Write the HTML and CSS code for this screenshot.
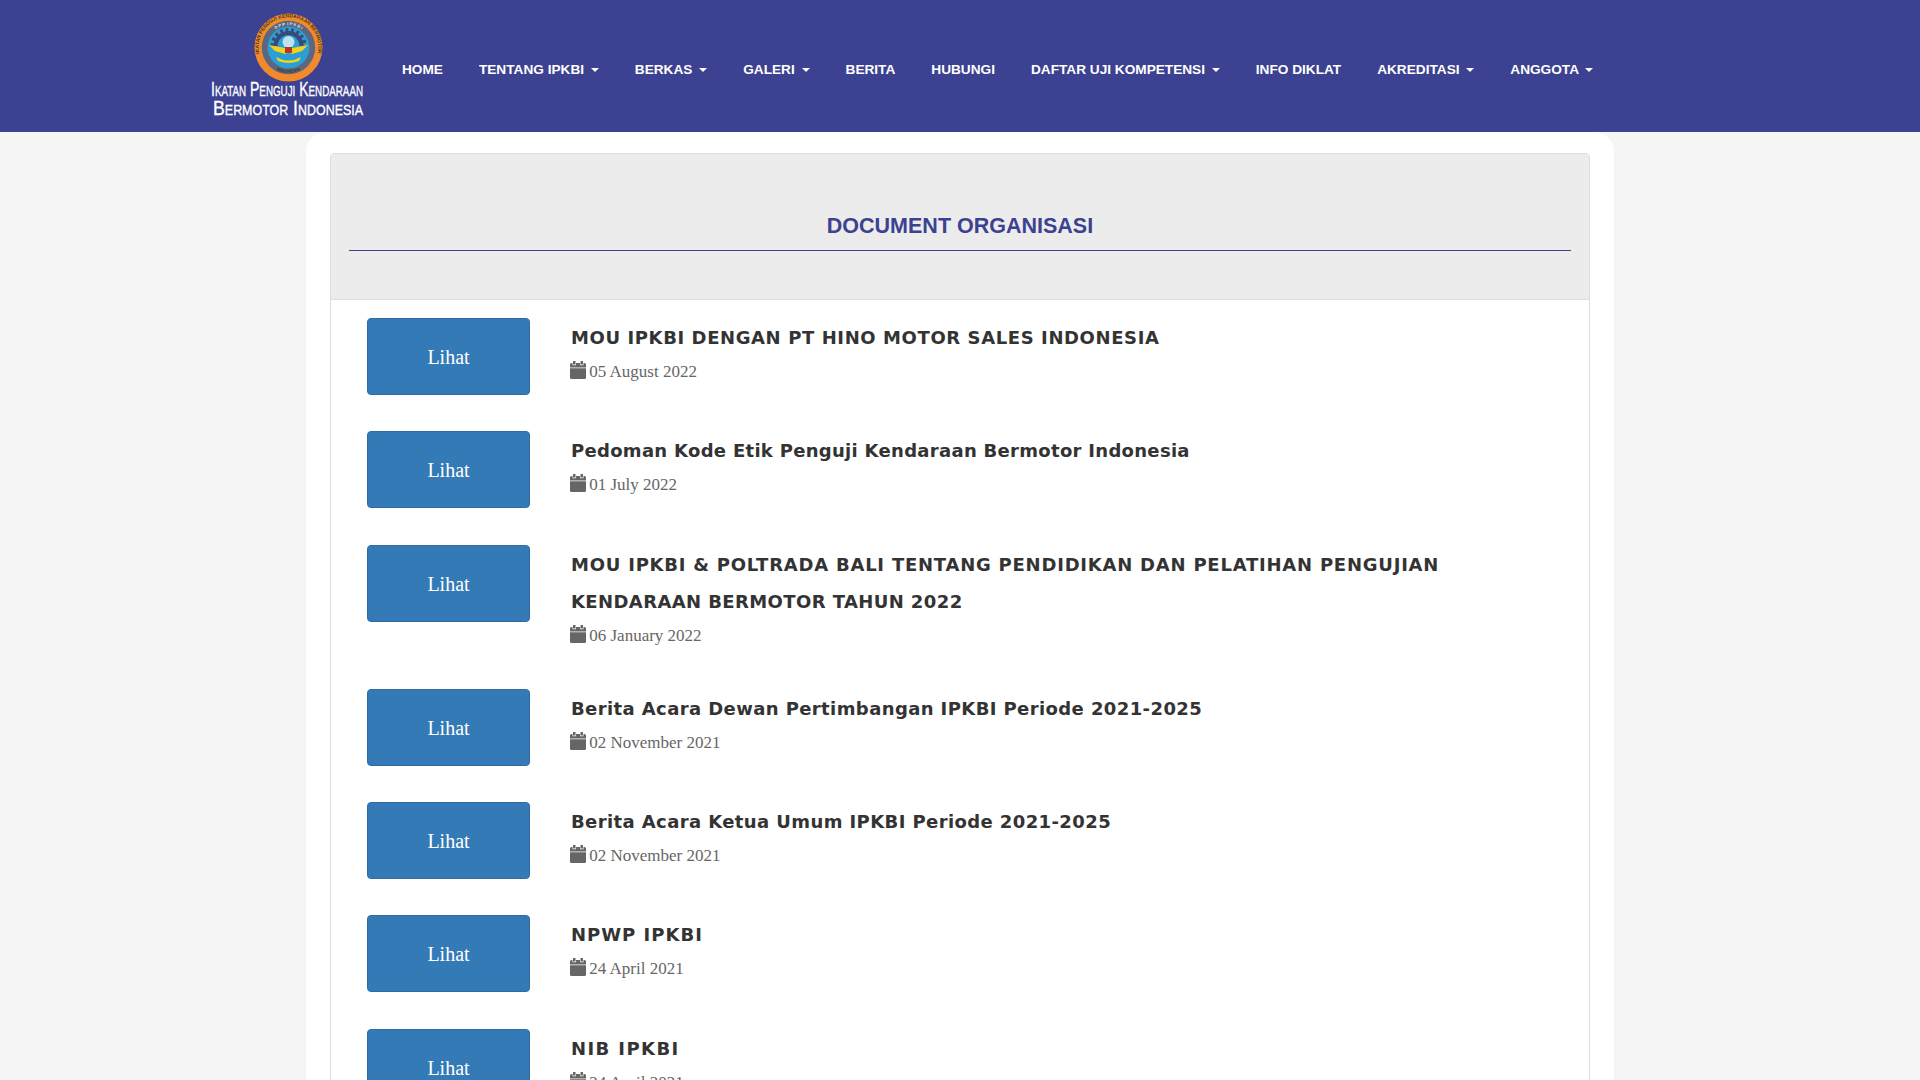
FILE: index.html
```html
<!DOCTYPE html>
<html lang="en">
<head>
    <meta charset="UTF-8">
    <meta name="viewport" content="width=device-width, initial-scale=1.0">
    <title>Document Organisasi</title>
    <link rel="stylesheet" href="styles.css">
</head>
<body>
    <svg class="icon-defs" width="0" height="0">
        <symbol id="cal" viewBox="0 0 16 18">
            <path d="M3 0h2.500v3.500h-2.500zM10.500 0h2.500v3.500h-2.500z"/>
            <path d="M1.500 2h1v2.200h3.500v-2.200h4v2.200h3.500v-2.200h1a1.500 1.500 0 0 1 1.500 1.500v3h-16v-3a1.500 1.500 0 0 1 1.500-1.500z"/>
            <path d="M0 7.300h16v9.200a1.500 1.500 0 0 1-1.500 1.500h-13a1.500 1.500 0 0 1-1.500-1.500z"/>
        </symbol>
    </svg>

    <header class="topbar">
        <a class="brand" href="#">
            <svg class="logo" width="160" height="120" viewBox="0 0 160 120">
                <defs>
                    <path id="ringTop" d="M57 65.500a29.800 29.800 0 1 1 47 0"/>
                    <path id="ringMid" d="M60 38.500a22.400 22.400 0 0 1 41 0"/>
                    <path id="ringBottom" d="M59 62a26.800 26.800 0 0 0 43 0"/>
                </defs>
                <circle cx="80.500" cy="47.500" r="34" fill="#f08a2c"/>
                <circle cx="80.500" cy="47.500" r="26.700" fill="#59677f"/>
                <circle cx="80.500" cy="47.500" r="21" fill="#2a9ed6"/>
                <path d="M66 46a14.500 14.500 0 0 1 29 0" fill="none" stroke="#3a4a78" stroke-width="7" stroke-dasharray="2.500 2.500"/>
                <path d="M67.500 46a13 13 0 0 1 26 0" fill="none" stroke="#3a4a78" stroke-width="4"/>
                <circle cx="80.500" cy="42" r="6" fill="#bfe3ee"/>
                <path d="M61 45l16 3 3 5-3 1-10-3zM100 45l-16 3-3 5 3 1 10-3z" fill="#f3d21e"/>
                <path d="M68 57q12.500 7 25 0l-2 4q-10 4-21 0z" fill="#f3d21e"/>
                <path d="M77 47h7v6h-7z" fill="#b5342c"/>
                <text class="ring-text" font-size="5"><textPath href="#ringTop" startOffset="50%" text-anchor="middle">IKATAN PENGUJI KENDARAAN BERMOTOR</textPath></text>
                <text class="ring-mid" font-size="4"><textPath href="#ringMid" startOffset="50%" text-anchor="middle">D P P  I P K B I</textPath></text>
                <text class="ring-text" font-size="4.500"><textPath href="#ringBottom" startOffset="50%" text-anchor="middle">INDONESIA</textPath></text>
                <text class="logo-line" x="3" y="96" font-size="20" textLength="152" lengthAdjust="spacingAndGlyphs">Ikatan Penguji Kendaraan</text>
                <text class="logo-line" x="5" y="114.500" font-size="20" textLength="150" lengthAdjust="spacingAndGlyphs">Bermotor Indonesia</text>
            </svg>
        </a>
        <nav class="mainnav">
            <a href="#">Home</a>
            <a href="#">Tentang IPKBI <span class="caret"></span></a>
            <a href="#">Berkas <span class="caret"></span></a>
            <a href="#">Galeri <span class="caret"></span></a>
            <a href="#">Berita</a>
            <a href="#">Hubungi</a>
            <a href="#">Daftar Uji Kompetensi <span class="caret"></span></a>
            <a href="#">Info Diklat</a>
            <a href="#">Akreditasi <span class="caret"></span></a>
            <a href="#">Anggota <span class="caret"></span></a>
        </nav>
    </header>

    <main class="content">
        <section class="panel">
            <div class="panel-heading">
                <h3>DOCUMENT ORGANISASI</h3>
            </div>
            <div class="panel-body">
                <article class="doc">
                    <a class="btn-lihat" href="#">Lihat</a>
                    <div class="doc-info">
                        <h4 class="caps">MOU IPKBI DENGAN PT HINO MOTOR SALES INDONESIA</h4>
                        <p class="doc-date"><svg class="cal"><use href="#cal"/></svg> 05 August 2022</p>
                    </div>
                </article>
                <article class="doc">
                    <a class="btn-lihat" href="#">Lihat</a>
                    <div class="doc-info">
                        <h4 class="mixed">Pedoman Kode Etik Penguji Kendaraan Bermotor Indonesia</h4>
                        <p class="doc-date"><svg class="cal"><use href="#cal"/></svg> 01 July 2022</p>
                    </div>
                </article>
                <article class="doc">
                    <a class="btn-lihat" href="#">Lihat</a>
                    <div class="doc-info">
                        <h4><span class="long-line">MOU IPKBI &amp; POLTRADA BALI TENTANG PENDIDIKAN DAN PELATIHAN PENGUJIAN</span> KENDARAAN BERMOTOR TAHUN 2022</h4>
                        <p class="doc-date"><svg class="cal"><use href="#cal"/></svg> 06 January 2022</p>
                    </div>
                </article>
                <article class="doc">
                    <a class="btn-lihat" href="#">Lihat</a>
                    <div class="doc-info">
                        <h4>Berita Acara Dewan Pertimbangan IPKBI Periode 2021-2025</h4>
                        <p class="doc-date"><svg class="cal"><use href="#cal"/></svg> 02 November 2021</p>
                    </div>
                </article>
                <article class="doc">
                    <a class="btn-lihat" href="#">Lihat</a>
                    <div class="doc-info">
                        <h4>Berita Acara Ketua Umum IPKBI Periode 2021-2025</h4>
                        <p class="doc-date"><svg class="cal"><use href="#cal"/></svg> 02 November 2021</p>
                    </div>
                </article>
                <article class="doc">
                    <a class="btn-lihat" href="#">Lihat</a>
                    <div class="doc-info">
                        <h4 class="short">NPWP IPKBI</h4>
                        <p class="doc-date"><svg class="cal"><use href="#cal"/></svg> 24 April 2021</p>
                    </div>
                </article>
                <article class="doc">
                    <a class="btn-lihat" href="#">Lihat</a>
                    <div class="doc-info">
                        <h4 class="shorter">NIB IPKBI</h4>
                        <p class="doc-date"><svg class="cal"><use href="#cal"/></svg> 24 April 2021</p>
                    </div>
                </article>
            </div>
        </section>
    </main>
</body>
</html>
```

FILE: styles.css
```css
html, body {
    height: 1080px;
    overflow: hidden;
}

body {
    margin: 0;
    background-color: #f5f5f5;
    font-family: "Liberation Serif", serif;
    color: #333;
}

.icon-defs {
    display: block;
    height: 0;
}

/* Top bar */
.topbar {
    display: flex;
    height: 132px;
    padding-left: 208px;
    background-color: #3c4191;
}

.brand {
    display: block;
    width: 160px;
    height: 132px;
}

.logo {
    display: block;
}

.logo-line {
    font-family: "Liberation Sans", sans-serif;
    font-variant: small-caps;
    fill: #fff;
    stroke: #fff;
    stroke-width: 0.35px;
}

.ring-text {
    font-family: "Liberation Sans", sans-serif;
    font-weight: bold;
    fill: #4a3a20;
}

.ring-mid {
    font-family: "Liberation Sans", sans-serif;
    font-weight: bold;
    fill: #e6e9ef;
    white-space: pre;
}

.mainnav {
    display: flex;
    align-items: center;
    margin-left: 16px;
    padding-top: 6px;
}

.mainnav a {
    padding: 0 18px;
    color: #fff;
    font-family: "Liberation Sans", sans-serif;
    font-size: 13.65px;
    font-weight: bold;
    text-transform: uppercase;
    text-decoration: none;
    white-space: nowrap;
}

.caret {
    display: inline-block;
    width: 0;
    height: 0;
    margin-left: 3px;
    vertical-align: middle;
    border-top: 4px solid #fff;
    border-left: 4px solid transparent;
    border-right: 4px solid transparent;
}

/* Content */
.content {
    width: 1260px;
    margin: 0 auto;
    padding: 21px 24px 0;
    background-color: #fff;
    border-radius: 20px;
}

.panel {
    border: 1px solid #ddd;
    border-radius: 4px;
    background-color: #fff;
}

.panel-heading {
    height: 145px;
    padding: 0 18px;
    background-color: #ececec;
    border-bottom: 1px solid #ddd;
}

.panel-heading h3 {
    margin: 0;
    padding-top: 59px;
    height: 37px;
    border-bottom: 1px solid #3c4191;
    color: #3c4191;
    font-family: "Liberation Sans", sans-serif;
    font-size: 21.5px;
    line-height: 26px;
    font-weight: bold;
    text-align: center;
}

.panel-body {
    padding: 18px 36px 0;
}

.doc {
    display: flex;
    align-items: flex-start;
    margin-bottom: 36.3px;
}

.btn-lihat {
    flex: none;
    width: 163px;
    height: 77px;
    line-height: 77px;
    box-sizing: border-box;
    border: 1px solid #2e6da4;
    border-radius: 4px;
    background-color: #337ab7;
    color: #fff;
    font-size: 20px;
    text-align: center;
    text-decoration: none;
}

.doc-info {
    margin-left: 41px;
    padding-top: 1px;
    max-width: 950px;
    flex: 1;
}

.doc-info h4 {
    margin: 0;
    font-family: "DejaVu Sans", sans-serif;
    font-size: 18px;
    line-height: 37px;
    font-weight: bold;
    letter-spacing: 0.4px;
    color: #333;
}

/* Title widths differ a bit per title */
.doc-info h4.caps {
    letter-spacing: 0.6px;
}

.doc-info h4.mixed {
    letter-spacing: 0.3px;
}

.doc-info h4.short {
    letter-spacing: 1px;
}

.doc-info h4.shorter {
    letter-spacing: 1.4px;
}

.long-line {
    letter-spacing: 0.77px;
}

.doc-date {
    margin: 0 0 1px;
    font-size: 17px;
    line-height: 32px;
    color: #666;
}

.cal {
    width: 16px;
    height: 18px;
    margin: 0 -1px;
    fill: #666;
    vertical-align: -2px;
}
```
